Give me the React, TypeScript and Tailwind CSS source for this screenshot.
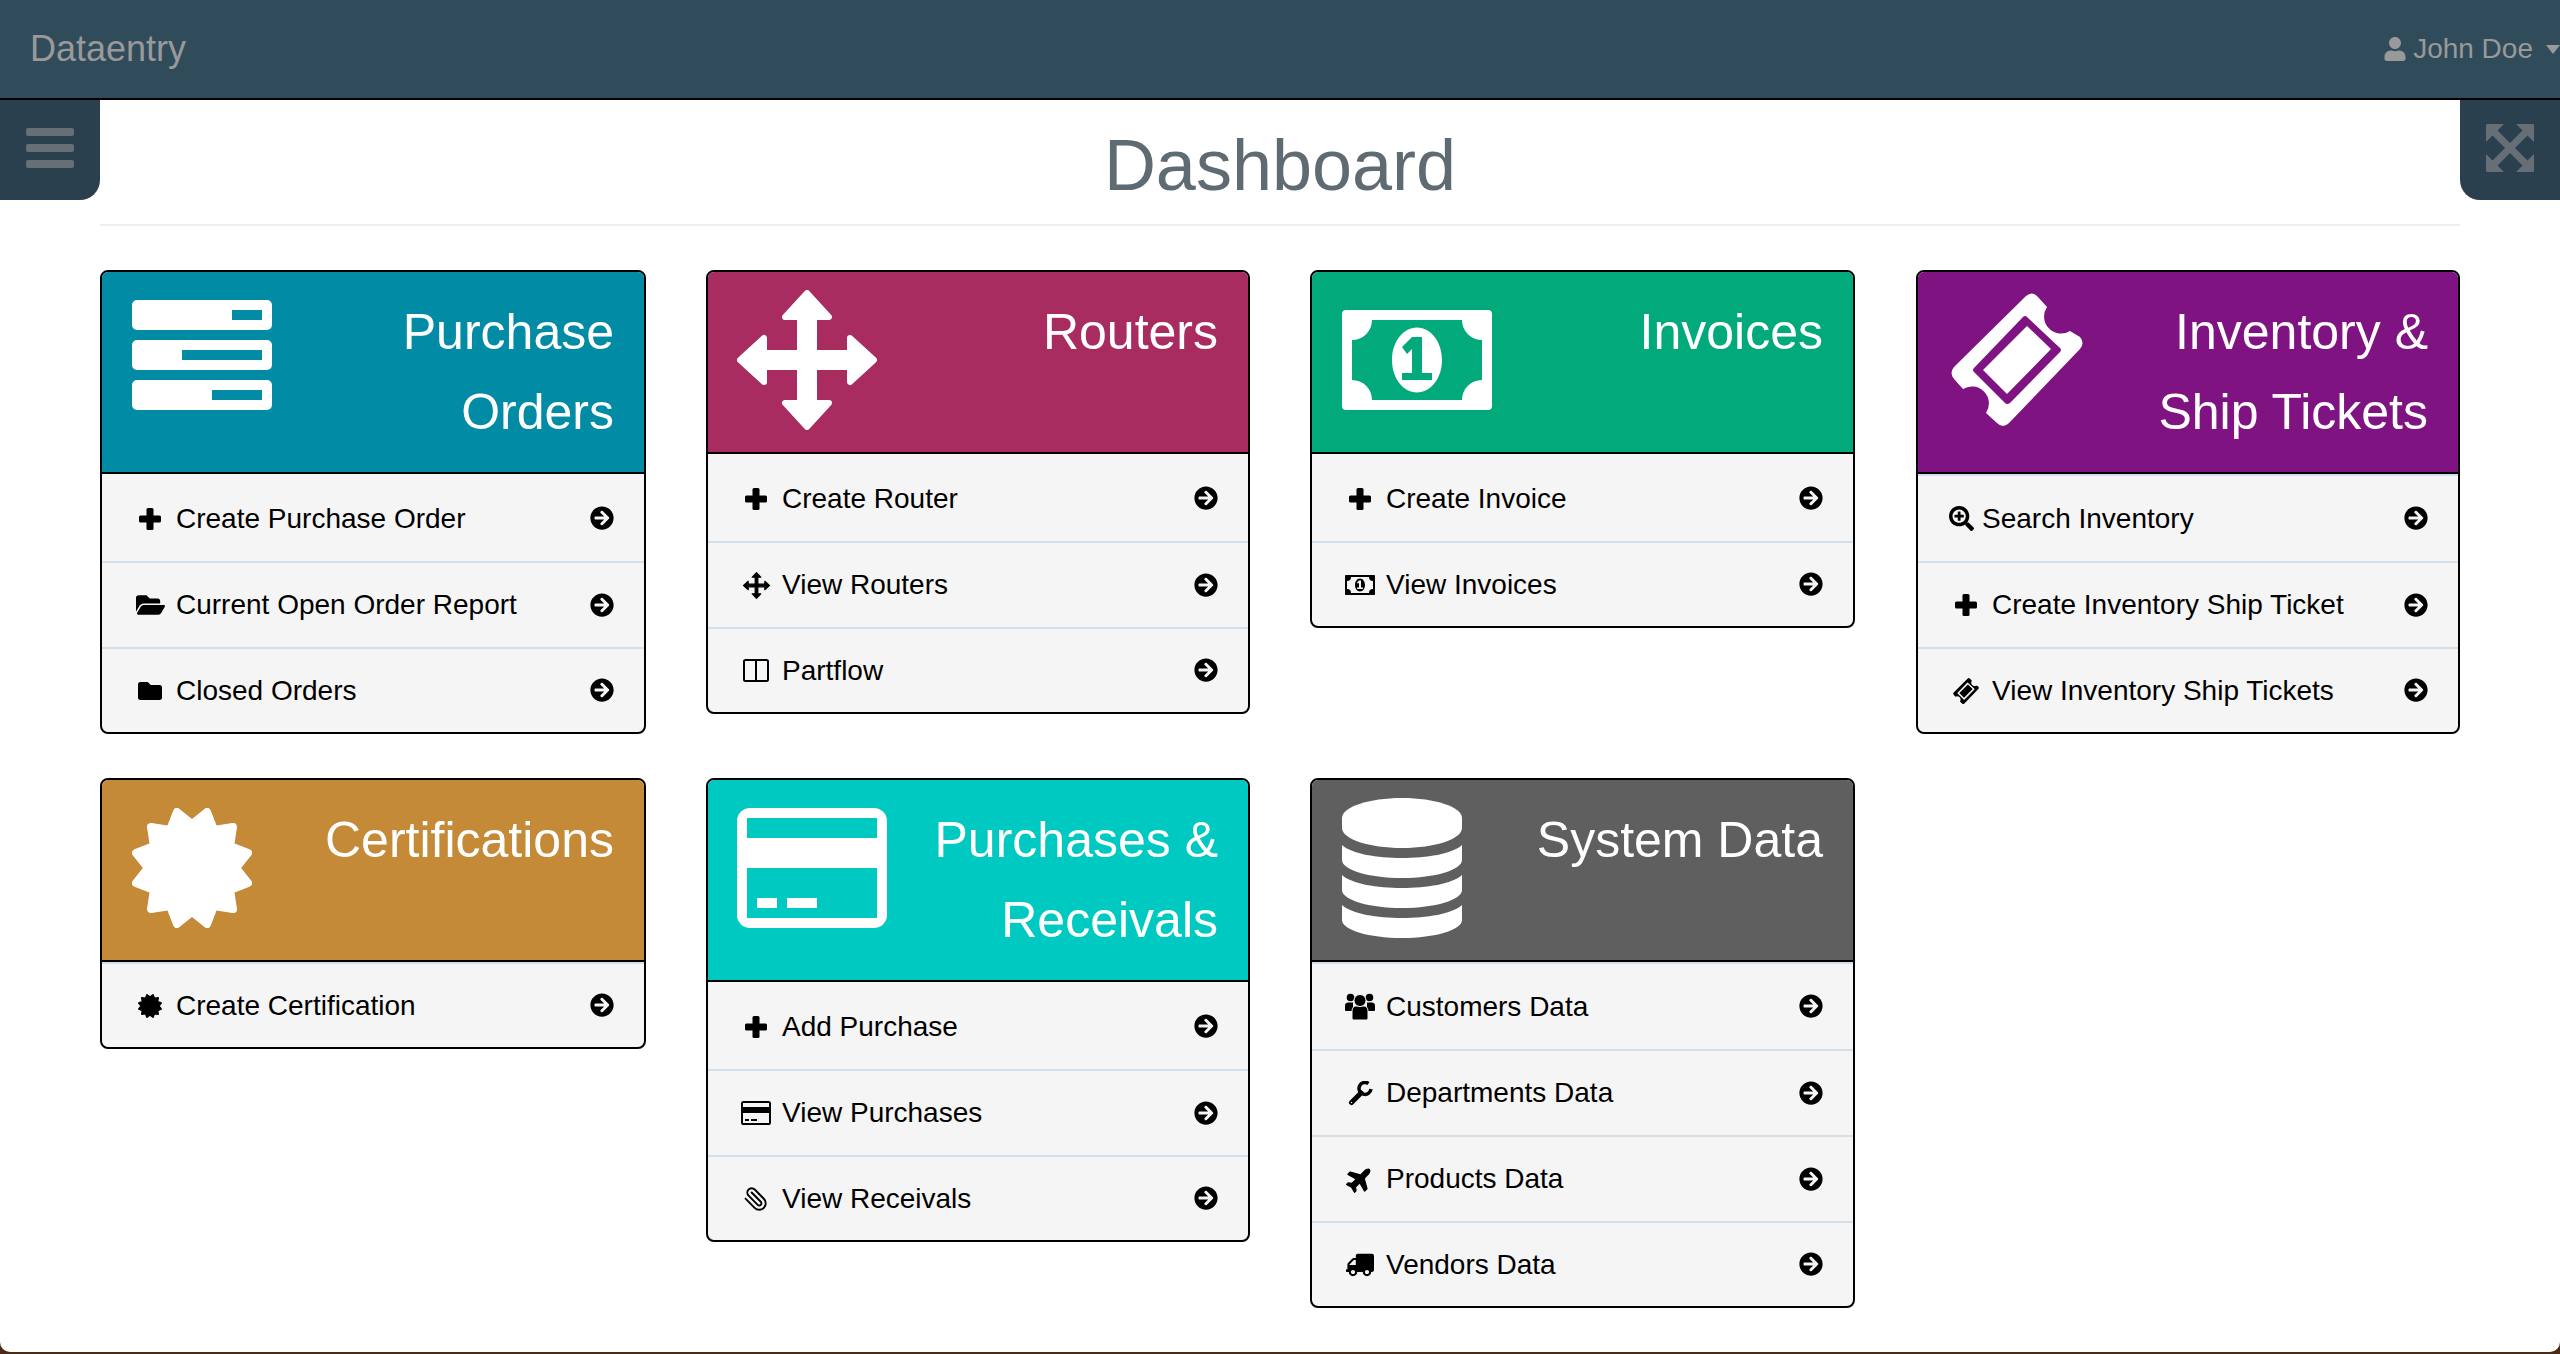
import React from "react";
import { Paperclip } from "lucide-react";
import {
  FaArrowCircleRight,
  FaFolder,
  FaFolderOpen,
  FaPlane,
  FaSearchPlus,
  FaTruck,
  FaUser,
} from "react-icons/fa";

type SvgProps = { className?: string };

function TasksIcon({ className }: SvgProps) {
  return (
    <svg viewBox="0 0 140 110" className={className} fill="currentColor" fillRule="evenodd">
      <path d="M5 0H135A5 5 0 0 1 140 5V25A5 5 0 0 1 135 30H5A5 5 0 0 1 0 25V5A5 5 0 0 1 5 0ZM100 10V20H130V10Z" />
      <path d="M5 40H135A5 5 0 0 1 140 45V65A5 5 0 0 1 135 70H5A5 5 0 0 1 0 65V45A5 5 0 0 1 5 40ZM50 50V60H130V50Z" />
      <path d="M5 80H135A5 5 0 0 1 140 85V105A5 5 0 0 1 135 110H5A5 5 0 0 1 0 105V85A5 5 0 0 1 5 80ZM80 90V100H130V90Z" />
    </svg>
  );
}

function MoveIcon({ className }: SvgProps) {
  return (
    <svg viewBox="0 0 140 140" className={className} fill="currentColor" stroke="currentColor" strokeWidth="6" strokeLinejoin="round">
      <path d="M70 3L92 27H77V63H113V48L137 70L113 92V77H77V113H92L70 137L48 113H63V77H27V92L3 70L27 48V63H63V27H48Z" />
    </svg>
  );
}

function MoneyIcon({ className }: SvgProps) {
  return (
    <svg viewBox="0 0 150 100" className={className} fill="currentColor" fillRule="evenodd">
      <path d="M4 0H146A4 4 0 0 1 150 4V96A4 4 0 0 1 146 100H4A4 4 0 0 1 0 96V4A4 4 0 0 1 4 0ZM30 10H120A20 20 0 0 0 140 30V70A20 20 0 0 0 120 90H30A20 20 0 0 0 10 70V30A20 20 0 0 0 30 10ZM75 17.500C61 17.500 50 32 50 50C50 68 61 82.500 75 82.500C89 82.500 100 68 100 50C100 32 89 17.500 75 17.500ZM70 27H80V63H90V70H60V63H70V39L65 44L60 37Z" />
    </svg>
  );
}

function TicketIcon({ className }: SvgProps) {
  return (
    <svg viewBox="0 0 132 133" className={className} fill="currentColor" fillRule="evenodd">
      <path d="M75 3Q81 -2 86 3L96 14A17 17 0 0 0 119 38L129 44Q134 50 129 56L58 130Q52 136 46 130L35 120A17 17 0 0 0 12 96L3 86Q-2 80 3 74ZM76 24L109 55Q111 57 109 59L59 110Q56 112 54 110L23 79Q21 77 23 75L72 24Q74 22 76 24ZM76 33L32 77L56 101L100 56Z" />
    </svg>
  );
}

function CertificateIcon({ className }: SvgProps) {
  const pts: string[] = [];
  for (let i = 0; i < 24; i++) {
    const r = i % 2 === 0 ? 44 : 58;
    const a = (i * 15 * Math.PI) / 180;
    pts.push(`${(60 + r * Math.cos(a)).toFixed(1)},${(60 + r * Math.sin(a)).toFixed(1)}`);
  }
  return (
    <svg viewBox="0 0 120 120" className={className} fill="currentColor" stroke="currentColor" strokeWidth="8" strokeLinejoin="round">
      <polygon points={pts.join(" ")} />
    </svg>
  );
}

function CardIcon({ className }: SvgProps) {
  return (
    <svg viewBox="0 0 150 120" className={className} fill="currentColor" fillRule="evenodd">
      <path d="M13 0H137A13 13 0 0 1 150 13V107A13 13 0 0 1 137 120H13A13 13 0 0 1 0 107V13A13 13 0 0 1 13 0ZM10 10V30H140V10ZM10 60V110H140V60ZM20 90H40V100H20ZM50 90H80V100H50Z" />
    </svg>
  );
}

function DatabaseIcon({ className }: SvgProps) {
  const band = "C10 56 35 60 60 60C85 60 110 56 120 47V62C120 72 93 80 60 80C27 80 0 72 0 62Z";
  return (
    <svg viewBox="0 0 120 140" className={className} fill="currentColor">
      <path d="M60 0C93 0 120 9 120 20V30C120 41 93 50 60 50C27 50 0 41 0 30V20C0 9 27 0 60 0Z" />
      <path d={`M0 47${band}`} />
      <path d={`M0 47${band}`} transform="translate(0 30)" />
      <path d={`M0 47${band}`} transform="translate(0 60)" />
    </svg>
  );
}

function ColumnsIcon({ className }: SvgProps) {
  return (
    <svg viewBox="0 0 26 23" className={className} fill="none" stroke="currentColor" strokeWidth="2">
      <rect x="1" y="1" width="24" height="21" rx="1.500" />
      <path d="M13 1V22" />
    </svg>
  );
}

function PlusIcon({ className }: SvgProps) {
  return (
    <svg viewBox="0 0 22 22" className={className} fill="currentColor">
      <rect x="7.500" y="0" width="7" height="22" rx="1.500" />
      <rect x="0" y="7.500" width="22" height="7" rx="1.500" />
    </svg>
  );
}

function WrenchIcon({ className }: SvgProps) {
  return (
    <svg viewBox="0 0 25 25" className={className} fill="none" stroke="currentColor">
      <path d="M3.500 21.500L13 12" strokeWidth="5" strokeLinecap="round" />
      <path d="M20.500 2.500A6 6 0 1 0 23 8" strokeWidth="3.500" />
      <circle cx="3.500" cy="21.500" r="0.800" fill="#f5f5f5" stroke="none" />
    </svg>
  );
}

function UsersIcon({ className }: SvgProps) {
  return (
    <svg viewBox="0 0 30 27" className={className} fill="currentColor">
      <circle cx="5.500" cy="4.500" r="3.800" />
      <circle cx="24.500" cy="4.500" r="3.800" />
      <path d="M0 17V12.500C0 10.500 1.500 9.500 3 9.500H8V18H2C1 18 0 18 0 17Z" />
      <path d="M30 17V12.500C30 10.500 28.500 9.500 27 9.500H22V18H28C29 18 30 18 30 17Z" />
      <path d="M7 25V18C7 14.500 9 13 11 13H19C21 13 23 14.500 23 18V25C23 26.500 22 27 20.500 27H9.500C8 27 7 26.500 7 25Z" stroke="#f5f5f5" strokeWidth="1" />
      <circle cx="15" cy="7.500" r="6" stroke="#f5f5f5" strokeWidth="1" />
    </svg>
  );
}

function ExpandIcon({ className }: SvgProps) {
  return (
    <svg viewBox="0 0 48 48" className={className} fill="currentColor">
      <path d="M1 0H18L0 18V1ZM48 1V18L30 0H47ZM0 47V30L18 48H1ZM47 48H30L48 30V47Z" />
      <path d="M6 6L42 42M42 6L6 42" stroke="currentColor" strokeWidth="7" />
    </svg>
  );
}

type Row = { label: string; icon: React.ReactNode; narrow?: boolean };

type Panel = {
  title: string;
  color: string;
  icon: React.ReactNode;
  ruled?: boolean;
  rows: Row[];
};

const plus = <PlusIcon className="w-[22px] h-[22px]" />;

const panels: Panel[] = [
  {
    title: "Purchase\nOrders",
    color: "bg-[#028ba5]",
    icon: <TasksIcon className="mt-[8px] w-[140px] h-[110px]" />,
    rows: [
      { label: "Create Purchase Order", icon: plus },
      { label: "Current Open Order Report", icon: <FaFolderOpen className="w-[29px] h-[26px]" /> },
      { label: "Closed Orders", icon: <FaFolder className="w-[26px] h-[24px]" /> },
    ],
  },
  {
    title: "Routers",
    color: "bg-[#a92c60]",
    icon: <MoveIcon className="-mt-[2px] -ml-[1px] w-[140px] h-[140px]" />,
    rows: [
      { label: "Create Router", icon: plus },
      { label: "View Routers", icon: <MoveIcon className="w-[27px] h-[27px]" /> },
      { label: "Partflow", icon: <ColumnsIcon className="w-[26px] h-[23px]" /> },
    ],
  },
  {
    title: "Invoices",
    color: "bg-[#02a97a]",
    icon: <MoneyIcon className="mt-[18px] w-[150px] h-[100px]" />,
    rows: [
      { label: "Create Invoice", icon: plus },
      { label: "View Invoices", icon: <MoneyIcon className="w-[30px] h-[20px]" /> },
    ],
  },
  {
    title: "Inventory &\nShip Tickets",
    color: "bg-[#801382]",
    icon: <TicketIcon className="ml-[3px] mt-[1px] w-[132px] h-[133px]" />,
    ruled: true,
    rows: [
      { label: "Search Inventory", icon: <FaSearchPlus className="w-[25px] h-[25px]" />, narrow: true },
      { label: "Create Inventory Ship Ticket", icon: plus },
      { label: "View Inventory Ship Tickets", icon: <TicketIcon className="w-[26px] h-[26px]" /> },
    ],
  },
  {
    title: "Certifications",
    color: "bg-[#c48a38]",
    icon: <CertificateIcon className="mt-[8px] w-[120px] h-[120px]" />,
    ruled: true,
    rows: [{ label: "Create Certification", icon: <CertificateIcon className="w-[24px] h-[24px]" /> }],
  },
  {
    title: "Purchases &\nReceivals",
    color: "bg-[#00c9c1]",
    icon: <CardIcon className="-ml-[1px] mt-[8px] w-[150px] h-[120px]" />,
    rows: [
      { label: "Add Purchase", icon: plus },
      { label: "View Purchases", icon: <CardIcon className="w-[30px] h-[24px]" /> },
      { label: "View Receivals", icon: <Paperclip className="w-[26px] h-[26px] -scale-x-100" strokeWidth={1.8} /> },
    ],
  },
  {
    title: "System Data",
    color: "bg-[#5f5f5f]",
    icon: <DatabaseIcon className="-mt-[2px] w-[120px] h-[140px]" />,
    ruled: true,
    rows: [
      { label: "Customers Data", icon: <UsersIcon className="w-[30px] h-[27px]" /> },
      { label: "Departments Data", icon: <WrenchIcon className="w-[25px] h-[25px]" /> },
      { label: "Products Data", icon: <FaPlane className="w-[28px] h-[28px] -rotate-45" /> },
      { label: "Vendors Data", icon: <FaTruck className="w-[28px] h-[24px] -scale-x-100" /> },
    ],
  },
];

function PanelCard({ panel }: { panel: Panel }) {
  return (
    <div className="border-2 border-black rounded-[8px] overflow-hidden bg-[#f5f5f5] [&:nth-child(4)]:ml-[1px]">
      <div className={`${panel.color} flex items-start justify-between min-h-[182px] border-b-2 border-black pt-[20px] pb-[20px] pl-[30px] pr-[30px] text-white`}>
        <div className="w-[150px] h-[140px] shrink-0">{panel.icon}</div>
        <div className="text-[50px] leading-[80px] text-right whitespace-pre-line">{panel.title}</div>
      </div>
      <div>
        {panel.rows.map((row, i) => (
          <a
            key={row.label}
            className={`flex items-center pl-[28px] pr-[30px] h-[86px] first:h-[87px] last:h-[85px] text-[28px] text-black border-t-2 ${
              i > 0 || panel.ruled ? "border-[#d3e0e9]" : "border-transparent"
            }`}
          >
            <span className={`flex justify-center items-center shrink-0 ${row.narrow ? "w-[30px]" : "w-[40px]"}`}>{row.icon}</span>
            <span className="ml-[6px] flex-1">{row.label}</span>
            <FaArrowCircleRight className="w-[24px] h-[24px] -mt-[1px]" />
          </a>
        ))}
      </div>
    </div>
  );
}

export default function App() {
  return (
    <div className="h-[1354px] overflow-hidden bg-[#4a2a18] font-['Liberation_Sans',Arial,sans-serif]">
      <div className="relative h-[1352px] bg-white rounded-b-[10px] overflow-hidden">
        <nav className="h-[100px] bg-[#304c5b] border-b-2 border-black flex items-center justify-between pl-[30px] text-[#999999]">
          <span className="text-[36px]">Dataentry</span>
          <span className="flex items-center text-[28px]">
            <FaUser className="w-[24px] h-[24px] mr-[6px]" />
            <span>John Doe</span>
            <span className="ml-[13px] w-0 h-0 border-x-[7.5px] border-x-transparent border-t-[9px] border-t-[#999999]" />
          </span>
        </nav>

        <button className="absolute left-0 top-[100px] w-[100px] h-[100px] bg-[#2b404e] rounded-br-[20px] flex flex-col gap-[8px] pl-[26px] pt-[28px] text-[#666f76]">
          <span className="block w-[48px] h-[8px] rounded-[2px] bg-[#666f76]" />
          <span className="block w-[48px] h-[8px] rounded-[2px] bg-[#666f76]" />
          <span className="block w-[48px] h-[8px] rounded-[2px] bg-[#666f76]" />
        </button>
        <button className="absolute right-0 top-[100px] w-[100px] h-[100px] bg-[#2b404e] rounded-bl-[20px] flex items-start justify-center pt-[24px] text-[#666f76]">
          <ExpandIcon className="w-[48px] h-[48px]" />
        </button>

        <main className="px-[100px]">
          <div className="pt-[15px] pb-[9px] border-b-2 border-[#eeeeee] text-center">
            <h1 className="text-[72px] leading-[100px] text-[#5f6b73]">Dashboard</h1>
          </div>
          <div className="grid grid-cols-[546px_544px_545px_545px] gap-x-[60px] gap-y-[44px] items-start mt-[44px]">
            {panels.map((panel) => (
              <PanelCard key={panel.title} panel={panel} />
            ))}
          </div>
        </main>
      </div>
    </div>
  );
}
